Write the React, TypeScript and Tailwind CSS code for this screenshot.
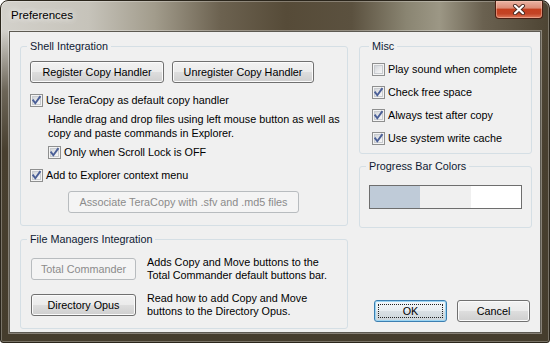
import React from "react";

const font = "font-['Liberation_Sans',Arial,sans-serif]";

function CheckBox({ checked }: { checked?: boolean }) {
  return (
    <span className="relative flex h-[13px] w-[13px] shrink-0 items-center justify-center border border-[#8e8f8f] bg-[#f4f4f4]">
      <span className="h-[9px] w-[9px] border border-[#c8cbcf] bg-[linear-gradient(135deg,#d2d5d9_0%,#e9eaec_55%,#f7f7f7_100%)]" />
      {checked && (
        <svg className="absolute left-0 top-0" width="11" height="11" viewBox="0 0 11 11">
          <path d="M2.2 5.4 L4.3 8.2 L8.9 1.9" fill="none" stroke="#4a5f97" strokeWidth="1.9" strokeLinecap="square" />
        </svg>
      )}
    </span>
  );
}

function CheckRow({ checked, children, className = "" }: { checked?: boolean; children: React.ReactNode; className?: string }) {
  return (
    <div className={`flex h-[14px] items-center gap-[3px] whitespace-nowrap ${className}`}>
      <CheckBox checked={checked} />
      <span className="leading-[14px]">{children}</span>
    </div>
  );
}

function Btn({
  children,
  className = "",
  disabled,
  focused,
}: {
  children: React.ReactNode;
  className?: string;
  disabled?: boolean;
  focused?: boolean;
}) {
  let cls =
    "border-[#707070] bg-[linear-gradient(to_bottom,#f2f2f2_0%,#ebebeb_48%,#dddddd_52%,#cfcfcf_100%)] shadow-[inset_0_0_0_1px_#fbfbfb] text-black";
  if (disabled) cls = "border-[#b8bcbf] bg-[#f4f4f4] text-[#8b8b8b]";
  if (focused)
    cls =
      "border-[#3c7fb1] bg-[linear-gradient(to_bottom,#f4f8fa_0%,#e9eef1_48%,#d9e0e4_52%,#ccd5da_100%)] shadow-[inset_0_0_0_1px_#9cd5f3] text-black";
  return (
    <div
      className={`relative flex h-[22px] shrink-0 items-center justify-center whitespace-nowrap rounded-[3px] border leading-[14px] ${cls} ${className}`}
    >
      {focused && <span className="absolute inset-[3px] border border-dotted border-[#222]" />}
      <span>{children}</span>
    </div>
  );
}

function Group({
  title,
  children,
  className = "",
}: {
  title: string;
  children: React.ReactNode;
  className?: string;
}) {
  return (
    <fieldset className={`min-w-0 rounded-[3px] border border-[#d5dfe5] ${className}`}>
      <legend className="ml-[-3px] bg-[#f0f0f0] px-[3px] leading-[14px] text-[#0e1a33]">{title}</legend>
      {children}
    </fieldset>
  );
}

export default function App() {
  return (
    <div className={`${font} text-[10.8px] text-black`}>
      <div className="flex h-[343px] w-[550px] flex-col rounded-t-[8px] rounded-b-[3px] border border-[#2a251b] bg-[linear-gradient(to_bottom,rgba(74,66,50,0)_0px,rgba(74,66,50,0)_30px,rgba(74,66,50,0.75)_90px,#483f2f_150px,#453d2d_100%),linear-gradient(to_right,#d3d1cb_0%,#c6c3ba_16%,#a29c8c_28%,#6c6250_40%,#564b38_52%,#5b513f_64%,#8a8572_74%,#9c9785_80%,#6a6150_88%,#4d4433_100%)] shadow-[inset_0_0_0_1px_rgba(255,255,255,0.28)]">
        {/* Title bar */}
        <div className="flex h-[30px] shrink-0 justify-between">
          <div className="self-center pl-[10px] text-[11.5px] text-black [text-shadow:0_0_6px_rgba(255,255,255,0.9),0_0_10px_rgba(255,255,255,0.7)]">
            Preferences
          </div>
          <div className="mr-[6px] flex h-[18px] w-[48px] items-center justify-center rounded-b-[4px] border border-t-0 border-[#4a1e12] bg-[linear-gradient(to_bottom,#eab3a3_0%,#dc8e78_40%,#c5401f_50%,#c34325_75%,#de7a5c_100%)] shadow-[inset_0_0_0_1px_rgba(255,210,190,0.45)]">
            <svg width="14" height="11" viewBox="0 0 14 11">
              <path d="M3 1.8 L11 9.2 M11 1.8 L3 9.2" stroke="#4a2a22" strokeWidth="4" strokeLinecap="round" fill="none" />
              <path d="M3 1.8 L11 9.2 M11 1.8 L3 9.2" stroke="#ffffff" strokeWidth="2.2" strokeLinecap="round" fill="none" />
            </svg>
          </div>
        </div>

        {/* Client area */}
        <div className="mx-[8px] flex h-[302px] shrink-0 border border-[#5d5a52] bg-[#f0f0f0] px-[10px] pt-[7px] shadow-[0_0_0_1px_rgba(255,255,255,0.35)]">
          {/* Left column */}
          <div className="flex w-[328px] shrink-0 flex-col">
            <Group title="Shell Integration" className="px-[9px] pb-[12px] pt-[8px]">
              <div className="flex gap-[8px]">
                <Btn className="w-[134px]">Register Copy Handler</Btn>
                <Btn className="w-[142px]">Unregister Copy Handler</Btn>
              </div>
              <CheckRow checked className="mt-[10px]">
                Use TeraCopy as default copy handler
              </CheckRow>
              <p className="ml-[18px] mt-[5px] whitespace-nowrap leading-[14px]">
                Handle drag and drop files using left mouse button as well as
                <br />
                copy and paste commands in Explorer.
              </p>
              <CheckRow checked className="ml-[18px] mt-[5px]">
                Only when Scroll Lock is OFF
              </CheckRow>
              <CheckRow checked className="mt-[9px]">
                Add to Explorer context menu
              </CheckRow>
              <Btn disabled className="ml-[38px] mt-[9px] w-[231px]">
                Associate TeraCopy with .sfv and .md5 files
              </Btn>
            </Group>

            <Group title="File Managers Integration" className="mt-[6px] px-[9px] pb-[10px] pt-[10px]">
              <div className="flex items-center">
                <Btn disabled className="ml-[1px] w-[105px]">
                  Total Commander
                </Btn>
                <p className="ml-[11px] whitespace-nowrap leading-[13px]">
                  Adds Copy and Move buttons to the
                  <br />
                  Total Commander default buttons bar.
                </p>
              </div>
              <div className="mt-[10px] flex items-center">
                <Btn className="ml-[1px] w-[105px]">Directory Opus</Btn>
                <p className="ml-[11px] whitespace-nowrap leading-[13px]">
                  Read how to add Copy and Move
                  <br />
                  buttons to the Directory Opus.
                </p>
              </div>
            </Group>
          </div>

          {/* Right column */}
          <div className="ml-[11px] flex w-[173px] shrink-0 flex-col">
            <Group title="Misc" className="flex flex-col gap-[9px] pb-[8px] pl-[12px] pt-[9px]">
              <CheckRow>Play sound when complete</CheckRow>
              <CheckRow checked>Check free space</CheckRow>
              <CheckRow checked>Always test after copy</CheckRow>
              <CheckRow checked>Use system write cache</CheckRow>
            </Group>

            <Group title="Progress Bar Colors" className="mt-[5px] pb-[18px] pl-[9px] pt-[12px]">
              <div className="flex h-[24px] w-[153px] border border-[#6e6e6e] bg-white">
                <div className="w-[50px] bg-[#bfcbd8]" />
                <div className="w-[51px] bg-[#f0f0f0]" />
                <div className="flex-1 bg-white" />
              </div>
            </Group>

            <div className="mb-[10px] mt-auto flex justify-end gap-[10px] pr-[2px]">
              <Btn focused className="w-[73px]">
                OK
              </Btn>
              <Btn className="w-[73px]">Cancel</Btn>
            </div>
          </div>
        </div>
      </div>
    </div>
  );
}
